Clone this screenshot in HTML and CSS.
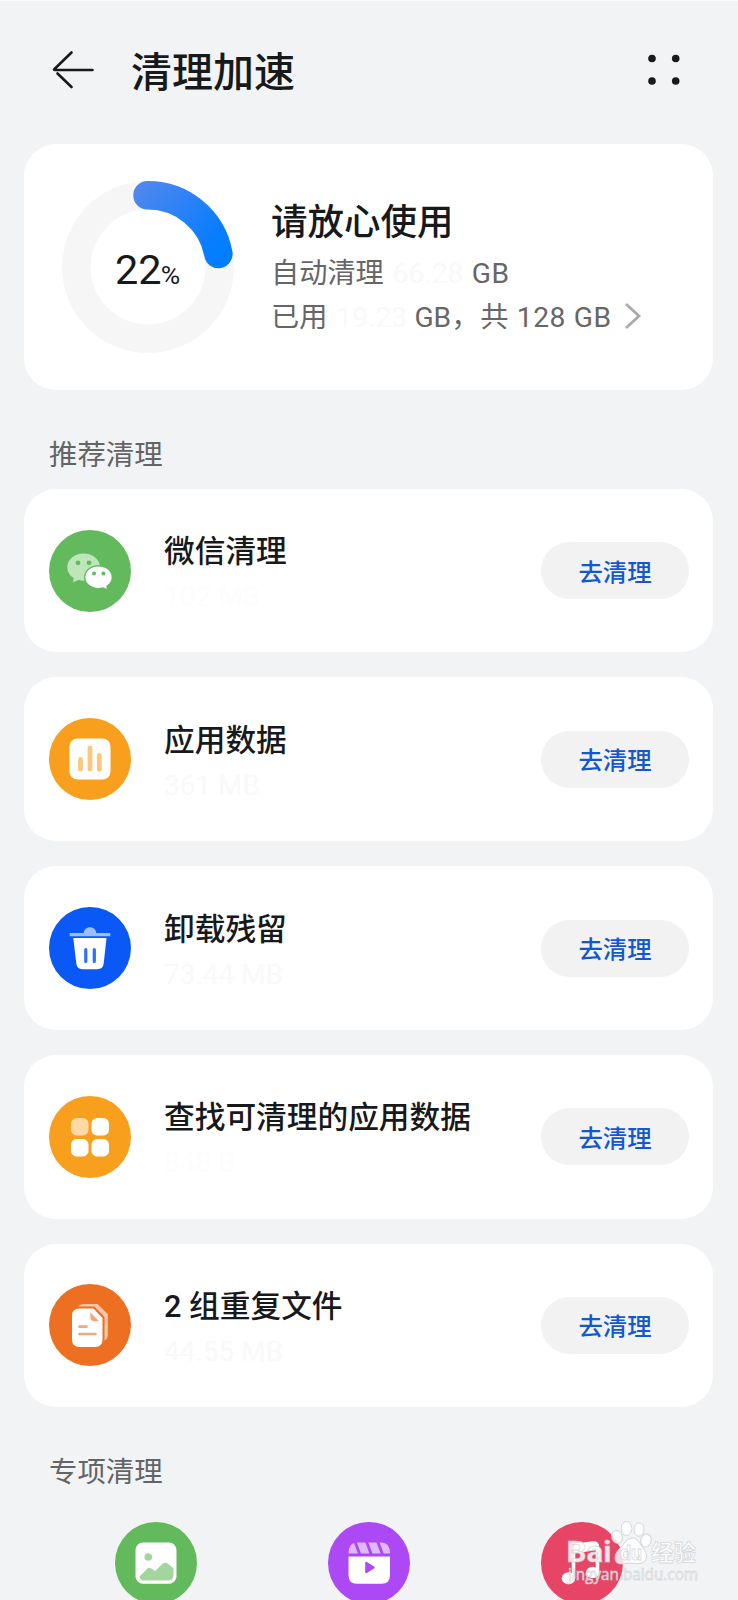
FILE: index.html
```html
<!DOCTYPE html>
<html lang="zh-CN">
<head>
<meta charset="utf-8">
<title>清理加速</title>
<link rel="stylesheet" href="styles.css">
</head>
<body>
<div class="page">
  <header class="header">
    <svg class="back" width="44" height="40" viewBox="0 0 44 40" fill="none" stroke="#17191b" stroke-width="2.6" stroke-linecap="round" stroke-linejoin="round"><path d="M41.500 20H4M20.500 2.500L3 19.500M6.500 23.500L20.500 37"/></svg>
    <h1 class="title">清理加速</h1>
    <svg class="more" width="34" height="34" viewBox="0 0 34 34" fill="#17191b"><circle cx="5" cy="5.500" r="3.800"/><circle cx="28.700" cy="5.500" r="3.800"/><circle cx="5" cy="28" r="3.800"/><circle cx="28.700" cy="28" r="3.800"/></svg>
  </header>

  <section class="card hero">
    <div class="gauge">
      <svg width="172" height="172" viewBox="0 0 172 172" fill="none">
        <defs><linearGradient id="arc" x1="75" y1="10" x2="160" y2="90" gradientUnits="userSpaceOnUse"><stop offset="0" stop-color="#4f87ee"/><stop offset=".75" stop-color="#087dff"/><stop offset="1" stop-color="#007dff"/></linearGradient></defs>
        <circle cx="86" cy="86" r="71.700" stroke="#f6f6f6" stroke-width="28.500"/>
        <path d="M85.500 14.300A71.700 71.700 0 0 1 156.400 73" stroke="url(#arc)" stroke-width="28.500" stroke-linecap="round"/>
      </svg>
      <div class="percent">22<span class="unit">%</span></div>
    </div>
    <div class="hero-text">
      <h2 class="hero-title">请放心使用</h2>
      <div class="line"><span>自动清理</span><span class="ghost g1">66.28</span><span class="gb">GB</span></div>
      <div class="line"><span>已用</span><span class="ghost g2">19.23</span><span>GB，</span><span class="total">共 128 GB</span>
        <svg class="chevron" width="18" height="28" viewBox="0 0 18 28" fill="none" stroke="#aaa" stroke-width="2.800"><path d="M2 2L15 14L2 26"/></svg></div>
    </div>
  </section>

  <h3 class="label">推荐清理</h3>
  <div class="list">
    <section class="card row">
      <svg class="icon" viewBox="0 0 82 82"><circle cx="41" cy="41" r="41" fill="#62ba5c"/>
        <path d="M34.500 23.500C25.500 23.500 18.300 29.500 18.300 37.200C18.300 41.600 20.700 45.400 24.700 48L24 52.300L29.500 49.900Q32 50.700 35 50.700C44 50.700 51 44.800 51 37.200C51 29.500 43.500 23.500 34.500 23.500Z" fill="#bfe5bb"/>
        <circle cx="29" cy="32.800" r="2.400" fill="#62ba5c"/><circle cx="40" cy="32.800" r="2.400" fill="#62ba5c"/>
        <path d="M49.500 35.700C57.300 35.700 63.300 40.800 63.300 47.300C63.300 50.900 61.500 54 58.200 56.200L58.600 60L54 58Q52 58.700 49.500 58.700C41.700 58.700 35.700 53.700 35.700 47.300C35.700 40.800 41.700 35.700 49.500 35.700Z" fill="#fff" stroke="#62ba5c" stroke-width="1.400"/>
        <circle cx="45" cy="43.500" r="2" fill="#62ba5c"/><circle cx="54.400" cy="43.500" r="2" fill="#62ba5c"/></svg>
      <div class="info"><div class="name">微信清理</div><div class="size ghost fainter">102 MB</div></div>
      <button class="go">去清理</button>
    </section>
    <section class="card row">
      <svg class="icon" viewBox="0 0 82 82"><circle cx="41" cy="41" r="41" fill="#f8a01e"/><rect x="20.500" y="20.500" width="41" height="41" rx="8" fill="#fff"/>
        <path d="M31.500 41.500V51.200M41 30V51.200M50.300 37.500V51.200" stroke="#fbc77a" stroke-width="4.800" stroke-linecap="round"/></svg>
      <div class="info"><div class="name">应用数据</div><div class="size ghost">361 MB</div></div>
      <button class="go">去清理</button>
    </section>
    <section class="card row">
      <svg class="icon" viewBox="0 0 82 82"><circle cx="41" cy="41" r="41" fill="#0a59f7"/>
        <path d="M20.700 26H34.700C35 22.400 37.500 20.200 41 20.200S47 22.400 47.300 26H61.300V29.200H20.700Z" fill="#9dbdfc"/>
        <path d="M24.300 31H57.500L54.700 56.500Q54.100 62.200 48.500 62.200H33.500Q27.900 62.200 27.300 56.500Z" fill="#fff"/>
        <path d="M36.800 42.500V54.500M45.300 42.500V54.500" stroke="#2d70f8" stroke-width="3.200" stroke-linecap="round"/></svg>
      <div class="info"><div class="name">卸载残留</div><div class="size ghost">73.44 MB</div></div>
      <button class="go">去清理</button>
    </section>
    <section class="card row">
      <svg class="icon" viewBox="0 0 82 82"><circle cx="41" cy="41" r="41" fill="#f8a01e"/>
        <g fill="#fff"><rect x="22" y="22" width="17.500" height="17.500" rx="5.600" fill="#fcd9a5"/><rect x="42.500" y="22" width="17.500" height="17.500" rx="5.600"/><rect x="22" y="43" width="17.500" height="17.500" rx="5.600"/><rect x="42.500" y="43" width="17.500" height="17.500" rx="5.600"/></g></svg>
      <div class="info"><div class="name">查找可清理的应用数据</div><div class="size ghost fainter">848 B</div></div>
      <button class="go">去清理</button>
    </section>
    <section class="card row">
      <svg class="icon" viewBox="0 0 82 82"><circle cx="41" cy="41" r="41" fill="#ed6f21"/>
        <path d="M29.500 22.500Q31 20 35 20H48.500L58.800 30V51Q58.800 54.500 55.500 56.500V33L45.500 22.500Z" fill="#f8c5a6"/>
        <path d="M30.500 24.500H44.500L53.500 34V55.500Q53.500 63 46 63H30.500Q23 63 23 55.500V32Q23 24.500 30.500 24.500Z" fill="#fff"/>
        <path d="M41.300 28.200L50 37.200H45.500Q41.300 37.200 41.300 33Z" fill="#f4a77a"/>
        <path d="M30.500 42.700H37.500M30.500 50H46.500" stroke="#f4a77a" stroke-width="2.700" stroke-linecap="round"/></svg>
      <div class="info"><div class="name">2 组重复文件</div><div class="size ghost">44.55 MB</div></div>
      <button class="go">去清理</button>
    </section>
  </div>

  <h3 class="label label-special">专项清理</h3>
  <div class="special">
    <svg class="icon" viewBox="0 0 82 82"><circle cx="41" cy="41" r="41" fill="#62ba5c"/><rect x="20.500" y="20.500" width="41" height="41.300" rx="7.500" fill="#fff"/><circle cx="33.300" cy="35" r="3.800" fill="#a3d69f"/>
      <path d="M24.500 54.500L32 47Q34 45 36.300 46.500L40 49L47.500 42Q50 39.500 53 41.800L58.500 46.500V53Q58.500 58.500 53 58.500H28Q25 58.500 24.500 54.500Z" fill="#a3d69f"/></svg>
    <svg class="icon" viewBox="0 0 82 82"><circle cx="41" cy="41" r="41" fill="#ac49f5"/>
      <path d="M20.500 31.500Q20.500 20.500 29 20.500H53.500Q62 20.500 62 31.500Z" fill="#e0b8fb"/><path d="M27 19.500L32 33M38.500 19.500L43.500 33M49.700 19.500L54.700 33" stroke="#ac49f5" stroke-width="2.800"/>
      <path d="M20.500 34.500H62V53Q62 61.800 53.500 61.800H29Q20.500 61.800 20.500 53Z" fill="#fff"/><path d="M38 40.500L46 45.500L38 50.500Z" fill="#ac49f5" stroke="#ac49f5" stroke-width="1.500" stroke-linejoin="round"/></svg>
    <svg class="icon" viewBox="0 0 82 82"><circle cx="41" cy="41" r="41" fill="#e64566"/>
      <path d="M32.500 56V28Q32.500 23.500 37 23L52 21Q56.500 20.500 56.500 25V50" fill="none" stroke="#fff" stroke-width="3.600"/><path d="M32.500 24L56.500 21V28L32.500 31.500Z" fill="#fff"/><ellipse cx="27.500" cy="56.300" rx="6.700" ry="6" fill="#fff"/><ellipse cx="51.500" cy="50.500" rx="6.500" ry="5.700" fill="#fff"/></svg>
  </div>

  <svg class="watermark" width="180" height="80" viewBox="0 0 180 80">
    <g fill="#fff" fill-opacity=".8" stroke="#cdd0d2" stroke-opacity=".85" stroke-width="1">
      <ellipse cx="76" cy="19" rx="5.300" ry="6.500" transform="rotate(-20 76 19)"/><ellipse cx="85.500" cy="10.500" rx="5.300" ry="7"/><ellipse cx="98" cy="11.500" rx="5" ry="6.700"/><ellipse cx="105" cy="22.500" rx="5.200" ry="6.500" transform="rotate(15 105 22.500)"/>
      <path d="M91 20C97 20 98 25 102 30C106 35 108 44 99 45.500C93 46.500 91 44 85 45.500C75 47.500 73 43 74.500 37C75.500 32 80 30 82.500 26Q86 20 91 20Z"/>
    </g>
    <g class="wm-text">
      <text x="25.500" y="43.500" class="wm-bai" textLength="45" lengthAdjust="spacingAndGlyphs">Bai</text>
      <text x="79" y="42" class="wm-du" textLength="22" lengthAdjust="spacingAndGlyphs">du</text>
      <text x="110" y="42.500" class="wm-cn">经验</text>
      <text x="27" y="61.500" class="wm-url" textLength="130" lengthAdjust="spacingAndGlyphs">jingyan.baidu.com</text>
    </g>
  </svg>
</div>
</body>
</html>
```

FILE: styles.css
```css
* { box-sizing: border-box; }
html { background: #f1f3f5; }
body {
  margin: 0;
  height: 1600px;
  overflow: hidden;
  font-family: Roboto, "Noto Sans CJK SC", sans-serif;
  color: #17191b;
}
h1, h2, h3 { margin: 0; }
.page {
  position: relative;
  width: 738px;
  height: 1600px;
  overflow: hidden;
  padding: 0 25px 0 24px;
  background: #f1f3f5;
  border-top: 1px solid #fafafb;
}
.header {
  display: flex;
  align-items: center;
  height: 143px;
  padding: 0 32px 4px 27px;
}
.back { margin-bottom: 1px; }
.more { margin-bottom: 1px; }
.title {
  flex: 1;
  margin-left: 36px;
  padding-top: 5px;
  font-size: 41px;
  line-height: 60px;
  font-weight: 500;
}
.card { background: #fff; border-radius: 32px; }
.hero {
  display: flex;
  height: 246px;
  padding: 37px 0 0 37.5px;
}
.gauge { display: grid; width: 172px; height: 172px; }
.gauge > * { grid-area: 1 / 1; }
.percent {
  padding-left: 53.5px;
  font-size: 41.5px;
  line-height: 178px;
}
.unit { font-size: 26.5px; margin-left: -1px; }
.hero-text { margin-left: 37.5px; padding-top: 17px; }
.hero-title { font-size: 36.5px; line-height: 50px; font-weight: 500; }
.line {
  display: flex;
  align-items: center;
  height: 44px;
  font-size: 28.2px;
  line-height: 44px;
  color: #666;
  white-space: nowrap;
}
.hero-title + .line { margin-top: 4px; }
.gb { letter-spacing: .6px; }
.total { margin-left: 1px; letter-spacing: .6px; }
.ghost { color: #f9f9f9; }
.fainter { color: #fdfdfd; }
.g1 { width: 88px; padding-left: 9px; }
.g2 { width: 87px; padding-left: 9px; }
.chevron { margin: -4px 0 0 12px; }
.label {
  padding: 46px 0 0 25px;
  height: 98.8px;
  font-size: 28.4px;
  line-height: 40px;
  font-weight: 400;
  color: #626466;
}
.list { display: grid; gap: 25px; }
.row {
  display: flex;
  align-items: center;
  height: 163.7px;
  padding: 0 24px 0 25px;
}
.icon { display: block; flex: none; width: 82px; height: 82px; }
.info { flex: 1; margin-left: 33px; padding-top: 4px; }
.name { font-size: 30.7px; line-height: 44px; font-weight: 500; }
.size { font-size: 28px; line-height: 36px; margin-top: 5px; }
.go {
  width: 148px;
  height: 57px;
  padding: 4px 0 0;
  border: 0;
  border-radius: 29px;
  background: #f2f2f2;
  color: #1458d0;
  font: 500 24.4px/40px Roboto, "Noto Sans CJK SC", sans-serif;
}
.label-special { height: 114.5px; }
.special {
  display: flex;
  justify-content: space-between;
  padding: 0 90px 0 91px;
}
.watermark { position: absolute; left: 541px; top: 1517px; }
.wm-text {
  fill: #fff;
  fill-opacity: .85;
  stroke: #c8cbce;
  stroke-opacity: .7;
  stroke-width: .8px;
}
.wm-bai { font: 700 30px Roboto, sans-serif; }
.wm-du { font: 700 20px Roboto, sans-serif; }
.wm-cn { font: 700 22.500px "Noto Sans CJK SC", sans-serif; }
.wm-url { font: 400 15.500px "Open Sans", sans-serif; }
```
